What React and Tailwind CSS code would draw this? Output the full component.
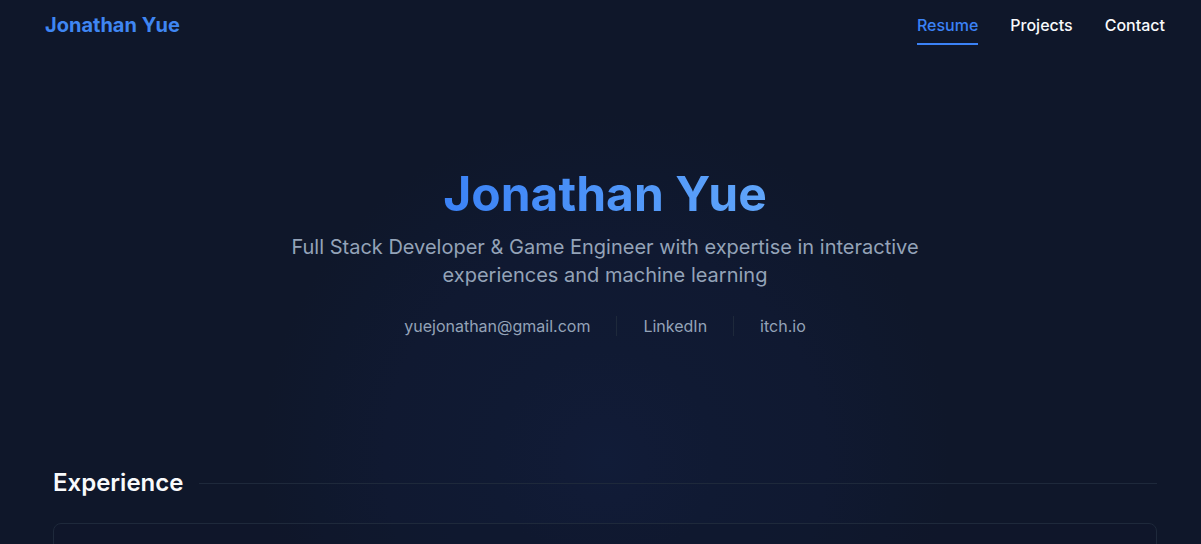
import React from 'react';

const navLinks = [
  { label: 'Resume', active: true },
  { label: 'Projects' },
  { label: 'Contact' },
];

const contacts = ['yuejonathan@gmail.com', 'LinkedIn', 'itch.io'];

const App = () => {
  return (
    <div
      className="min-h-screen overflow-hidden bg-[#0f172a] bg-[radial-gradient(circle_at_605px_460px,#111c38_0px,#111b36_40px,#101a33_110px,#101931_220px,#0f182d_290px,#0f172a_345px)] pl-[9px] text-[#f1f5f9]"
      style={{ fontFamily: 'Inter, "Noto Sans", sans-serif' }}
    >
      {/* Navbar */}
      <nav className="flex h-[50px] items-center justify-between px-9">
        <a href="#" className="text-xl font-bold text-[#3f86f2]">
          Jonathan Yue
        </a>
        <div className="flex h-full items-center gap-8">
          {navLinks.map(link => (
            <a
              key={link.label}
              href="#"
              className={`relative flex h-full items-center text-base font-medium ${
                link.active ? 'text-[#3b82f6]' : 'text-[#f8fafc]'
              }`}
            >
              {link.label}
              {link.active && (
                <span className="absolute bottom-[5px] left-0 right-0 h-[2px] bg-[#3b82f6]" />
              )}
            </a>
          ))}
        </div>
      </nav>

      {/* Hero */}
      <section className="flex flex-col items-center pt-[120px] pb-[129px] text-center">
        <h1 className="bg-gradient-to-r from-[#3b82f6] to-[#60a5fa] bg-clip-text text-5xl leading-none font-bold text-transparent">
          Jonathan Yue
        </h1>
        <p className="mt-[15px] max-w-[660px] text-xl leading-7 text-[#94a3b8]">
          Full Stack Developer &amp; Game Engineer with expertise in interactive experiences and machine learning
        </p>
        <div className="mt-[25px] flex items-center gap-[26px] text-base text-[#94a3b8]">
          {contacts.map((c, i) => (
            <React.Fragment key={c}>
              {i > 0 && <span className="h-5 w-px bg-[#1e293b]" />}
              <a href="#">{c}</a>
            </React.Fragment>
          ))}
        </div>
      </section>

      {/* Experience */}
      <section className="px-11">
        <div className="flex items-center gap-4">
          <h2 className="text-2xl font-semibold text-[#f8fafc]">Experience</h2>
          <div className="h-px flex-1 bg-[#1e293b]" />
        </div>
        <div className="mt-6 h-[120px] rounded-lg border border-[#1e293b] bg-[#0f172a]/40" />
      </section>
    </div>
  );
};

export default App;
